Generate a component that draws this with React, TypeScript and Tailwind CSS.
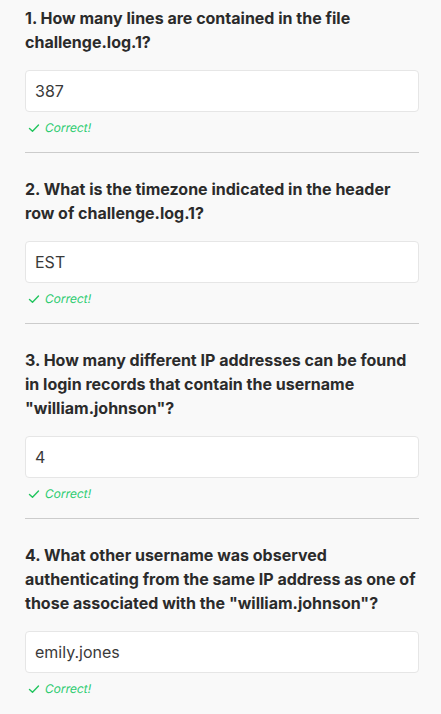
import React from "react";

const items = [
  { q: "1. How many lines are contained in the file challenge.log.1?", a: "387" },
  { q: "2. What is the timezone indicated in the header row of challenge.log.1?", a: "EST" },
  {
    q: '3. How many different IP addresses can be found in login records that contain the username "william.johnson"?',
    a: "4",
  },
  {
    q: '4. What other username was observed authenticating from the same IP address as one of those associated with the "william.johnson"?',
    a: "emily.jones",
  },
];

function Check() {
  return (
    <svg width="12" height="12" viewBox="0 0 12 12" fill="none" className="shrink-0">
      <path d="M1.5 6.5 L4.5 9.3 L10.5 3" stroke="#22c55e" strokeWidth="1.4" strokeLinecap="round" strokeLinejoin="round" />
    </svg>
  );
}

export default function App() {
  return (
    <div
      className="min-h-[714px] w-[441px] bg-[#f9f9f9] pl-[25px] pr-[22px] pt-[6px]"
      style={{ fontFamily: "Inter, 'Noto Sans', sans-serif" }}
    >
      {items.map((it, i) => (
        <div key={i}>
          <div className="text-[16px] font-bold leading-[24px] text-[#2b2b2b]">{it.q}</div>
          <div className="mt-4 flex h-[42px] items-center rounded-[4px] border border-[#e6e6e6] bg-white pl-[9px] text-[16px] text-[#3a3a3a]">
            {it.a}
          </div>
          <div className="mt-2 flex h-4 items-center gap-[5px] pl-[3px] text-[12px] text-[#2ecc71]">
            <Check />
            <span className="inline-block [transform:skewX(-11deg)]">Correct!</span>
          </div>
          {i < items.length - 1 && <div className="mb-6 mt-4 h-px bg-[#cccccc]" />}
        </div>
      ))}
    </div>
  );
}
